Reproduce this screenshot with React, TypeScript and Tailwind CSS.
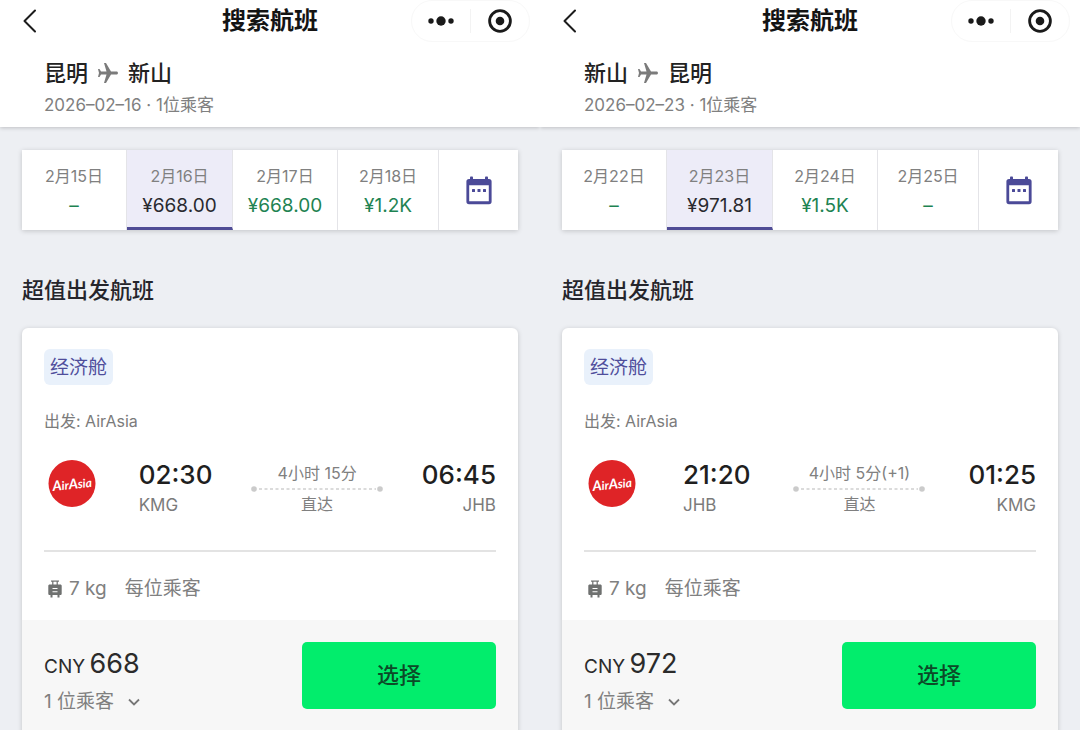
type DayFare = { date: string; fare: string; selected?: boolean };

type Flight = {
  from: string;
  to: string;
  date: string;
  days: DayFare[];
  departTime: string;
  departCode: string;
  arriveTime: string;
  arriveCode: string;
  duration: string;
  price: string;
};

const flights: Flight[] = [
  {
    from: "昆明",
    to: "新山",
    date: "2026–02–16",
    days: [
      { date: "2月15日", fare: "–" },
      { date: "2月16日", fare: "¥668.00", selected: true },
      { date: "2月17日", fare: "¥668.00" },
      { date: "2月18日", fare: "¥1.2K" },
    ],
    departTime: "02:30",
    departCode: "KMG",
    arriveTime: "06:45",
    arriveCode: "JHB",
    duration: "4小时 15分",
    price: "668",
  },
  {
    from: "新山",
    to: "昆明",
    date: "2026–02–23",
    days: [
      { date: "2月22日", fare: "–" },
      { date: "2月23日", fare: "¥971.81", selected: true },
      { date: "2月24日", fare: "¥1.5K" },
      { date: "2月25日", fare: "–" },
    ],
    departTime: "21:20",
    departCode: "JHB",
    arriveTime: "01:25",
    arriveCode: "KMG",
    duration: "4小时 5分(+1)",
    price: "972",
  },
];

function BackIcon() {
  return (
    <svg className="h-6 w-4" viewBox="0 0 16 24" fill="none" stroke="#1c1c1c" strokeWidth="2" strokeLinecap="round" strokeLinejoin="round">
      <path d="M13 1.5 2.5 12 13 22.5" />
    </svg>
  );
}

function PlaneIcon() {
  return (
    <svg className="size-6" viewBox="0 0 24 24" fill="#7b7b7b">
      <path
        transform="rotate(90 12 12)"
        d="M22 16v-2l-8.500-5V3.500c0-.83-.67-1.500-1.500-1.500s-1.500.67-1.500 1.500V9L2 14v2l8.500-2.500V19L8 20.500V22l4-1 4 1v-1.500L13.500 19v-5.500z"
      />
    </svg>
  );
}

function CalendarIcon() {
  return (
    <svg className="h-[30px] w-[26px]" viewBox="0 0 26 30" fill="#4b4a98">
      <rect x="4" y="0.5" width="3" height="5" rx="0.8" />
      <rect x="19" y="0.5" width="3" height="5" rx="0.8" />
      <path fillRule="evenodd" d="M3 3h20a2.600 2.600 0 0 1 2.600 2.600v20A2.600 2.600 0 0 1 23 28.200H3a2.600 2.600 0 0 1-2.600-2.600v-20A2.600 2.600 0 0 1 3 3zm.2 6.300v15.900h19.600V9.300z" />
      <rect x="6" y="13" width="3" height="3" rx="0.5" />
      <rect x="11.5" y="13" width="3" height="3" rx="0.5" />
      <rect x="17" y="13" width="3" height="3" rx="0.5" />
    </svg>
  );
}

function SuitcaseIcon() {
  return (
    <svg className="h-[18px] w-[14px]" viewBox="0 0 14 18" fill="#6f7170">
      <path d="M3 0.500h8v1.200H3z" />
      <path d="M4.200 1h1.200v4H4.200zM8.600 1h1.200v4H8.600z" />
      <path fillRule="evenodd" d="M1.600 4.500h10.800c.7 0 1.300.6 1.300 1.300v8c0 .7-.6 1.300-1.300 1.300H1.600c-.7 0-1.300-.6-1.300-1.300v-8c0-.7.6-1.300 1.300-1.300zM4.500 8v1.100h5V8zm0 3.200v1.100h5v-1.100z" />
      <path d="M2.500 15h2v2.500h-2zM9.500 15h2v2.500h-2z" />
    </svg>
  );
}

function AirlineLogo() {
  return (
    <svg className="size-14" viewBox="0 0 56 56" role="img" aria-label="AirAsia">
      <circle cx="28" cy="28.500" r="23.500" fill="#df2427" />
      <text
        x="28"
        y="34"
        textAnchor="middle"
        transform="rotate(-6 28 28)"
        className="font-['Lato'] text-[12px] font-bold italic"
        fill="#fff"
      >
        <tspan className="text-[14px]">A</tspan>
        <tspan>ir</tspan>
        <tspan className="text-[14px]">A</tspan>
        <tspan>sia</tspan>
      </text>
    </svg>
  );
}

function TitleBar() {
  return (
    <div className="grid h-10 grid-cols-[1fr_auto_1fr] items-center">
      <div className="flex pl-[22px]">
        <button type="button" aria-label="返回">
          <BackIcon />
        </button>
      </div>
      <h1 className="text-[24px] leading-10 font-bold text-[#141414]">搜索航班</h1>
      <div className="flex justify-end pr-[10px]">
        <div className="flex h-[42px] items-center rounded-full border border-[#f8f8f8]">
          <button type="button" aria-label="更多" className="flex w-[58px] justify-center">
            <svg className="h-6 w-7" viewBox="0 0 28 24" fill="#1a1a1a">
              <circle cx="4" cy="12" r="2.700" />
              <circle cx="14" cy="12" r="4.700" />
              <circle cx="24" cy="12" r="2.700" />
            </svg>
          </button>
          <span className="h-6 w-px bg-[#f3f3f3]" />
          <button type="button" aria-label="关闭" className="flex w-[58px] justify-center">
            <svg className="size-6" viewBox="0 0 24 24">
              <circle cx="12" cy="12" r="10.400" fill="none" stroke="#1a1a1a" strokeWidth="2.800" />
              <circle cx="12" cy="12" r="4.300" fill="#1a1a1a" />
            </svg>
          </button>
        </div>
      </div>
    </div>
  );
}

function DateStrip({ days }: { days: DayFare[] }) {
  return (
    <div className="grid h-20 grid-cols-[105fr_106fr_105fr_101fr_79fr] divide-x divide-[#e4e4e8] bg-white shadow-[0_1px_5px_rgba(0,0,0,0.18)]">
      {days.map((day) => (
        <button
          key={day.date}
          type="button"
          aria-pressed={!!day.selected}
          className={
            day.selected
              ? "border-b-[3px] border-b-[#504c96] bg-[#edecf8] pt-[5px] text-center"
              : "pt-[2px] text-center"
          }
        >
          <span className="block text-[16px] leading-[30px] text-[#808080]">{day.date}</span>
          <span
            className={
              day.selected
                ? "block text-[19px] leading-[30px] text-[#29292f]"
                : "block text-[19px] leading-[30px] text-[#1e8352]"
            }
          >
            {day.fare}
          </span>
        </button>
      ))}
      <button type="button" aria-label="选择日期" className="flex items-center justify-center pt-[2px]">
        <CalendarIcon />
      </button>
    </div>
  );
}

function FlightCard({ flight }: { flight: Flight }) {
  return (
    <article className="overflow-hidden rounded-md bg-white shadow-[0_1px_5px_rgba(0,0,0,0.18)]">
      <div className="px-[22px] pt-[21px]">
        <span className="inline-block rounded-md bg-[#e9f1fb] px-[6px] pt-[2px] text-[19px] leading-[34px] text-[#4f4d9b]">
          经济舱
        </span>
        <p className="mt-6 text-[16px] leading-6 text-[#7b7b7b]">出发: AirAsia</p>

        <div className="mt-[22px] flex items-start justify-between">
          <AirlineLogo />
          <div className="pt-1">
            <p className="text-[26px] leading-8 font-medium text-[#1f1f1f]">{flight.departTime}</p>
            <p className="text-[17px] leading-7 text-[#7b7b7b]">{flight.departCode}</p>
          </div>
          <div className="w-[132px] pt-[5px] text-center text-[16px] text-[#808080]">
            <p className="leading-[26px]">{flight.duration}</p>
            <svg className="h-[6px] w-full" viewBox="0 0 132 6">
              <circle cx="3" cy="3" r="2.800" fill="#cbcbcb" />
              <circle cx="129" cy="3" r="2.800" fill="#cbcbcb" />
              <path d="M8 3h117" stroke="#cfcfcf" strokeWidth="1.500" strokeDasharray="3 2.500" />
            </svg>
            <p className="leading-6">直达</p>
          </div>
          <div className="pt-1 text-right">
            <p className="text-[26px] leading-8 font-medium text-[#1f1f1f]">{flight.arriveTime}</p>
            <p className="text-[17px] leading-7 text-[#7b7b7b]">{flight.arriveCode}</p>
          </div>
        </div>

        <div className="mt-[31px] flex items-center border-t-2 border-[#e3e3e3] pt-[22px] pb-4 pl-1 text-[19px] leading-[30px] text-[#808080]">
          <SuitcaseIcon />
          <span className="ml-[7px]">7 kg</span>
          <span className="ml-[18px]">每位乘客</span>
        </div>
      </div>

      <div className="flex items-start justify-between bg-[#f7f7f7] px-[22px] pt-[22px] pb-8">
        <div className="pt-1">
          <p className="leading-9 text-[#2b2b2b]">
            <span className="text-[19px]">CNY</span> <span className="text-[27px]">{flight.price}</span>
          </p>
          <button type="button" className="flex items-center gap-[14px] text-[19px] leading-[34px] text-[#808080]">
            1 位乘客
            <svg className="h-2 w-3" viewBox="0 0 12 8" fill="none" stroke="#777" strokeWidth="1.800">
              <path d="M1 1.500l5 5 5-5" />
            </svg>
          </button>
        </div>
        <button type="button" className="w-[194px] rounded-[5px] bg-[#02ed6c] text-[22px] leading-[67px] font-medium text-[#0c4a28]">
          选择
        </button>
      </div>
    </article>
  );
}

function SearchScreen({ flight }: { flight: Flight }) {
  return (
    <section className="min-w-0 overflow-hidden">
      <header className="h-[127px] bg-white shadow-[0_1px_4px_rgba(0,0,0,0.2)]">
        <TitleBar />
        <div className="px-11 pt-4">
          <div className="flex items-center gap-2 text-[22px] leading-[34px] font-medium text-[#222]">
            <span>{flight.from}</span>
            <PlaneIcon />
            <span>{flight.to}</span>
          </div>
          <p className="text-[17px] leading-[30px] text-[#808080]">{flight.date} · 1位乘客</p>
        </div>
      </header>
      <main className="px-[22px] pt-[23px]">
        <DateStrip days={flight.days} />
        <h2 className="pt-11 pb-[22px] text-[22px] leading-8 font-medium text-[#25252b]">超值出发航班</h2>
        <FlightCard flight={flight} />
      </main>
    </section>
  );
}

export default function App() {
  return (
    <div className="grid h-screen grid-cols-2 overflow-hidden bg-[#edeff3] font-['Inter','Noto_Sans_CJK_SC',sans-serif]">
      {flights.map((flight) => (
        <SearchScreen key={flight.date} flight={flight} />
      ))}
    </div>
  );
}
